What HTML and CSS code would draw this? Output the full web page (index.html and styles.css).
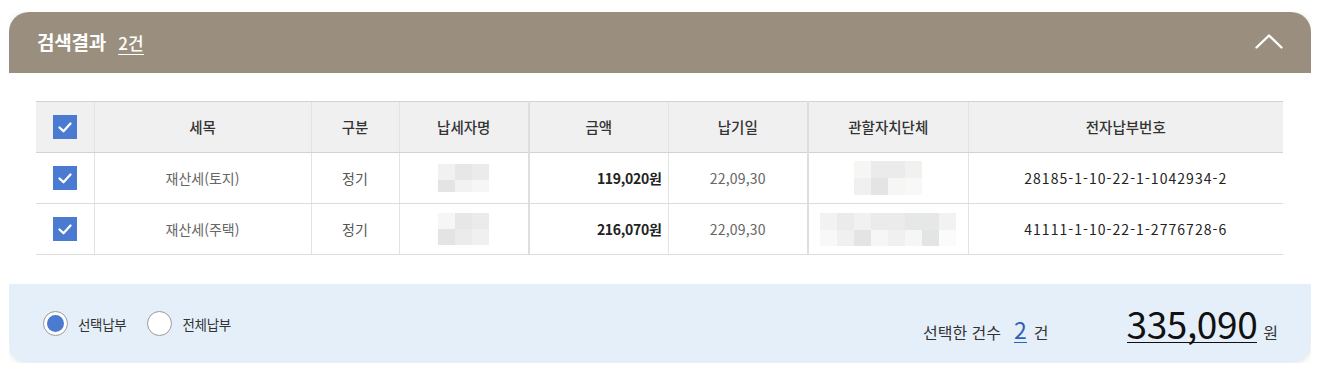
FILE: index.html
```html
<!DOCTYPE html>
<html lang="ko">
<head>
<meta charset="utf-8">
<title>검색결과</title>
<link rel="stylesheet" href="styles.css">
</head>
<body>
<section class="card">
  <header class="card-head">
    <h2 class="title">검색결과 <span class="count">2건</span></h2>
    <button class="toggle" type="button" aria-label="접기">
      <svg width="28" height="16" viewBox="0 0 28 16"><path d="M1.5 14.5 L14 2.5 L26.5 14.5" fill="none" stroke="#fff" stroke-width="2.4" stroke-linecap="round" stroke-linejoin="round"/></svg>
    </button>
  </header>
  <div class="card-body">
    <table class="grid">
      <colgroup>
        <col class="c-chk"><col class="c-item"><col class="c-type"><col class="c-name"><col class="c-amt"><col class="c-due"><col class="c-gov"><col class="c-no">
      </colgroup>
      <thead>
        <tr>
          <th><span class="chk"><svg width="24" height="24" viewBox="0 0 24 24"><path d="M6.5 12.5 L10.5 16.2 L17.5 8.5" fill="none" stroke="#fff" stroke-width="2.3" stroke-linecap="round" stroke-linejoin="round"/></svg></span></th>
          <th>세목</th>
          <th>구분</th>
          <th>납세자명</th>
          <th class="sep">금액</th>
          <th>납기일</th>
          <th class="sep">관할자치단체</th>
          <th>전자납부번호</th>
        </tr>
      </thead>
      <tbody>
        <tr>
          <td><span class="chk"><svg width="24" height="24" viewBox="0 0 24 24"><path d="M6.5 12.5 L10.5 16.2 L17.5 8.5" fill="none" stroke="#fff" stroke-width="2.3" stroke-linecap="round" stroke-linejoin="round"/></svg></span></td>
          <td class="muted">재산세(토지)</td>
          <td class="type">정기</td>
          <td><span class="blur b3"><i class="s1"></i><i class="s4"></i><i class="s3"></i><i class="s6"></i><i class="s5"></i><i class="s2"></i></span></td>
          <td class="sep amt">119,020원</td>
          <td class="date">22,09,30</td>
          <td class="sep"><span class="blur b4"><i class="s2"></i><i class="s3"></i><i class="s3"></i><i class="s1"></i><i class="s7"></i><i class="s6"></i><i class="s2"></i><i class="s8"></i></span></td>
          <td class="num">28185-1-10-22-1-1042934-2</td>
        </tr>
        <tr>
          <td><span class="chk"><svg width="24" height="24" viewBox="0 0 24 24"><path d="M6.5 12.5 L10.5 16.2 L17.5 8.5" fill="none" stroke="#fff" stroke-width="2.3" stroke-linecap="round" stroke-linejoin="round"/></svg></span></td>
          <td class="muted">재산세(주택)</td>
          <td class="type">정기</td>
          <td><span class="blur b3 r2"><i class="s2"></i><i class="s4"></i><i class="s3"></i><i class="s6"></i><i class="s3"></i><i class="s7"></i></span></td>
          <td class="sep amt">216,070원</td>
          <td class="date">22,09,30</td>
          <td class="sep"><span class="blur b8"><i class="s5"></i><i class="s3"></i><i class="s1"></i><i class="s3"></i><i class="s3"></i><i class="s4"></i><i class="s4"></i><i class="s5"></i><i class="s9"></i><i class="s7"></i><i class="s6"></i><i class="s2"></i><i class="s7"></i><i class="s2"></i><i class="s6"></i><i class="s10"></i></span></td>
          <td class="num">41111-1-10-22-1-2776728-6</td>
        </tr>
      </tbody>
    </table>
  </div>
  <footer class="card-foot">
    <div class="modes">
      <label class="radio"><span class="dot on"></span>선택납부</label>
      <label class="radio"><span class="dot"></span>전체납부</label>
    </div>
    <div class="summary">
      <span class="sel-label">선택한 건수</span>
      <span class="sel-count">2</span>
      <span class="unit">건</span>
      <span class="total">335,090</span>
      <span class="unit won">원</span>
    </div>
  </footer>
</section>
</body>
</html>
```
FILE: styles.css
```css
* { box-sizing: border-box; }
body {
  margin: 12px 8px 8px 9px;
  background: #fff;
  font-family: "Noto Sans CJK KR", "Noto Sans", sans-serif;
  color: #222;
}
.card {
  width: 1302px;
  background: #fff;
  border-radius: 20px;
  overflow: hidden;
  box-shadow: 0 1px 6px rgba(0,0,0,0.13);
}
.card-head {
  height: 61px;
  background: #9a8f7e;
  display: flex;
  align-items: center;
  justify-content: space-between;
  padding: 0 28px 0 28px;
}
.title {
  margin: 0;
  font-size: 19px;
  font-weight: 700;
  color: #fff;
  line-height: 24px;
  letter-spacing: -0.2px;
  display: flex;
  align-items: baseline;
}
.count {
  margin-left: 12px;
  font-size: 17px;
  font-weight: 500;
  letter-spacing: 0.3px;
  text-decoration: underline;
  text-underline-offset: 4px;
  text-decoration-thickness: 1px;
}
.toggle {
  border: 0;
  padding: 0;
  background: none;
  display: flex;
  margin-top: -3px;
}
.card-body {
  padding: 28px 27px 29px 27px;
}
.grid {
  width: 1247px;
  border-collapse: collapse;
  table-layout: fixed;
  font-size: 14px;
}
.c-chk { width: 58px; }
.c-item { width: 217px; }
.c-type { width: 88px; }
.c-name { width: 130px; }
.c-amt { width: 139px; }
.c-due { width: 140px; }
.c-gov { width: 160px; }
.c-no { width: 315px; }
.grid th, .grid td {
  height: 51px;
  padding: 0;
  text-align: center;
  vertical-align: middle;
  border-bottom: 1px solid #dcdcdc;
  border-left: 1px solid #e3e3e3;
  line-height: 20px;
}
.grid th:first-child, .grid td:first-child { border-left: 0; }
.grid th {
  background: #f0f0f0;
  border-top: 1px solid #d2d2d2;
  border-bottom: 1px solid #d2d2d2;
  font-weight: 500;
  color: #333;
  font-size: 14.5px;
}
.grid .sep { border-left: 2px solid #dedede; }
.muted { color: #666; }
.date { color: #666; letter-spacing: 0.2px; }
.type { color: #555; }
.amt {
  text-align: right !important;
  padding-right: 6px !important;
  font-weight: 700;
  color: #222;
  letter-spacing: -0.3px;
}
.num { color: #222; letter-spacing: 1.05px; }
.chk {
  display: inline-flex;
  width: 24px;
  height: 24px;
  background: #4a7bd0;
  vertical-align: middle;
}
.blur {
  display: inline-grid;
  grid-template-rows: 16px 12px;
  vertical-align: middle;
}
.blur.r2 { grid-template-rows: 16px 16px; }
.blur i { display: block; }
.b3 { grid-template-columns: repeat(3, 17px); }
.b4 { grid-template-columns: repeat(4, 17px); grid-template-rows: 17px 17px; }
.b8 { grid-template-columns: repeat(8, 17px); grid-template-rows: 17px 16px; }
.s1 { background: #f1f1f0; }
.s2 { background: #f6f6f5; }
.s3 { background: #ebebeb; }
.s4 { background: #e6e7e7; }
.s5 { background: #f2f2f2; }
.s6 { background: #e3e4e4; }
.s7 { background: #f0f0f0; }
.s8 { background: #f8f8f8; }
.s9 { background: #f8f8f6; }
.s10 { background: #fbfbfb; }
.card-foot {
  height: 79px;
  background: #e5eff9;
  display: flex;
  align-items: center;
  justify-content: space-between;
  padding: 0 33px 0 34px;
}
.modes { display: flex; gap: 21px; }
.radio {
  display: flex;
  align-items: center;
  gap: 10px;
  font-size: 13.5px;
  color: #333;
  letter-spacing: -0.3px;
}
.dot {
  width: 25px;
  height: 25px;
  border-radius: 50%;
  border: 1px solid #9a9a9a;
  background: #fff;
  display: flex;
  align-items: center;
  justify-content: center;
}
.dot.on::after {
  content: "";
  width: 17px;
  height: 17px;
  border-radius: 50%;
  background: #4a7bd0;
}
.summary {
  display: flex;
  align-items: baseline;
  color: #222;
}
.sel-label { font-size: 16px; letter-spacing: 0; color: #333; }
.sel-count {
  margin-left: 13px;
  font-size: 23px;
  color: #2f62b5;
  border-bottom: 1.5px solid #2f62b5;
  line-height: 26px;
}
.unit { font-size: 16px; margin-left: 7px; color: #333; }
.total {
  margin-left: 78px;
  font-size: 37px;
  line-height: 38px;
  color: #111;
  border-bottom: 1px solid #111;
  letter-spacing: -0.4px;
}
.won { margin-left: 6px; }
```
